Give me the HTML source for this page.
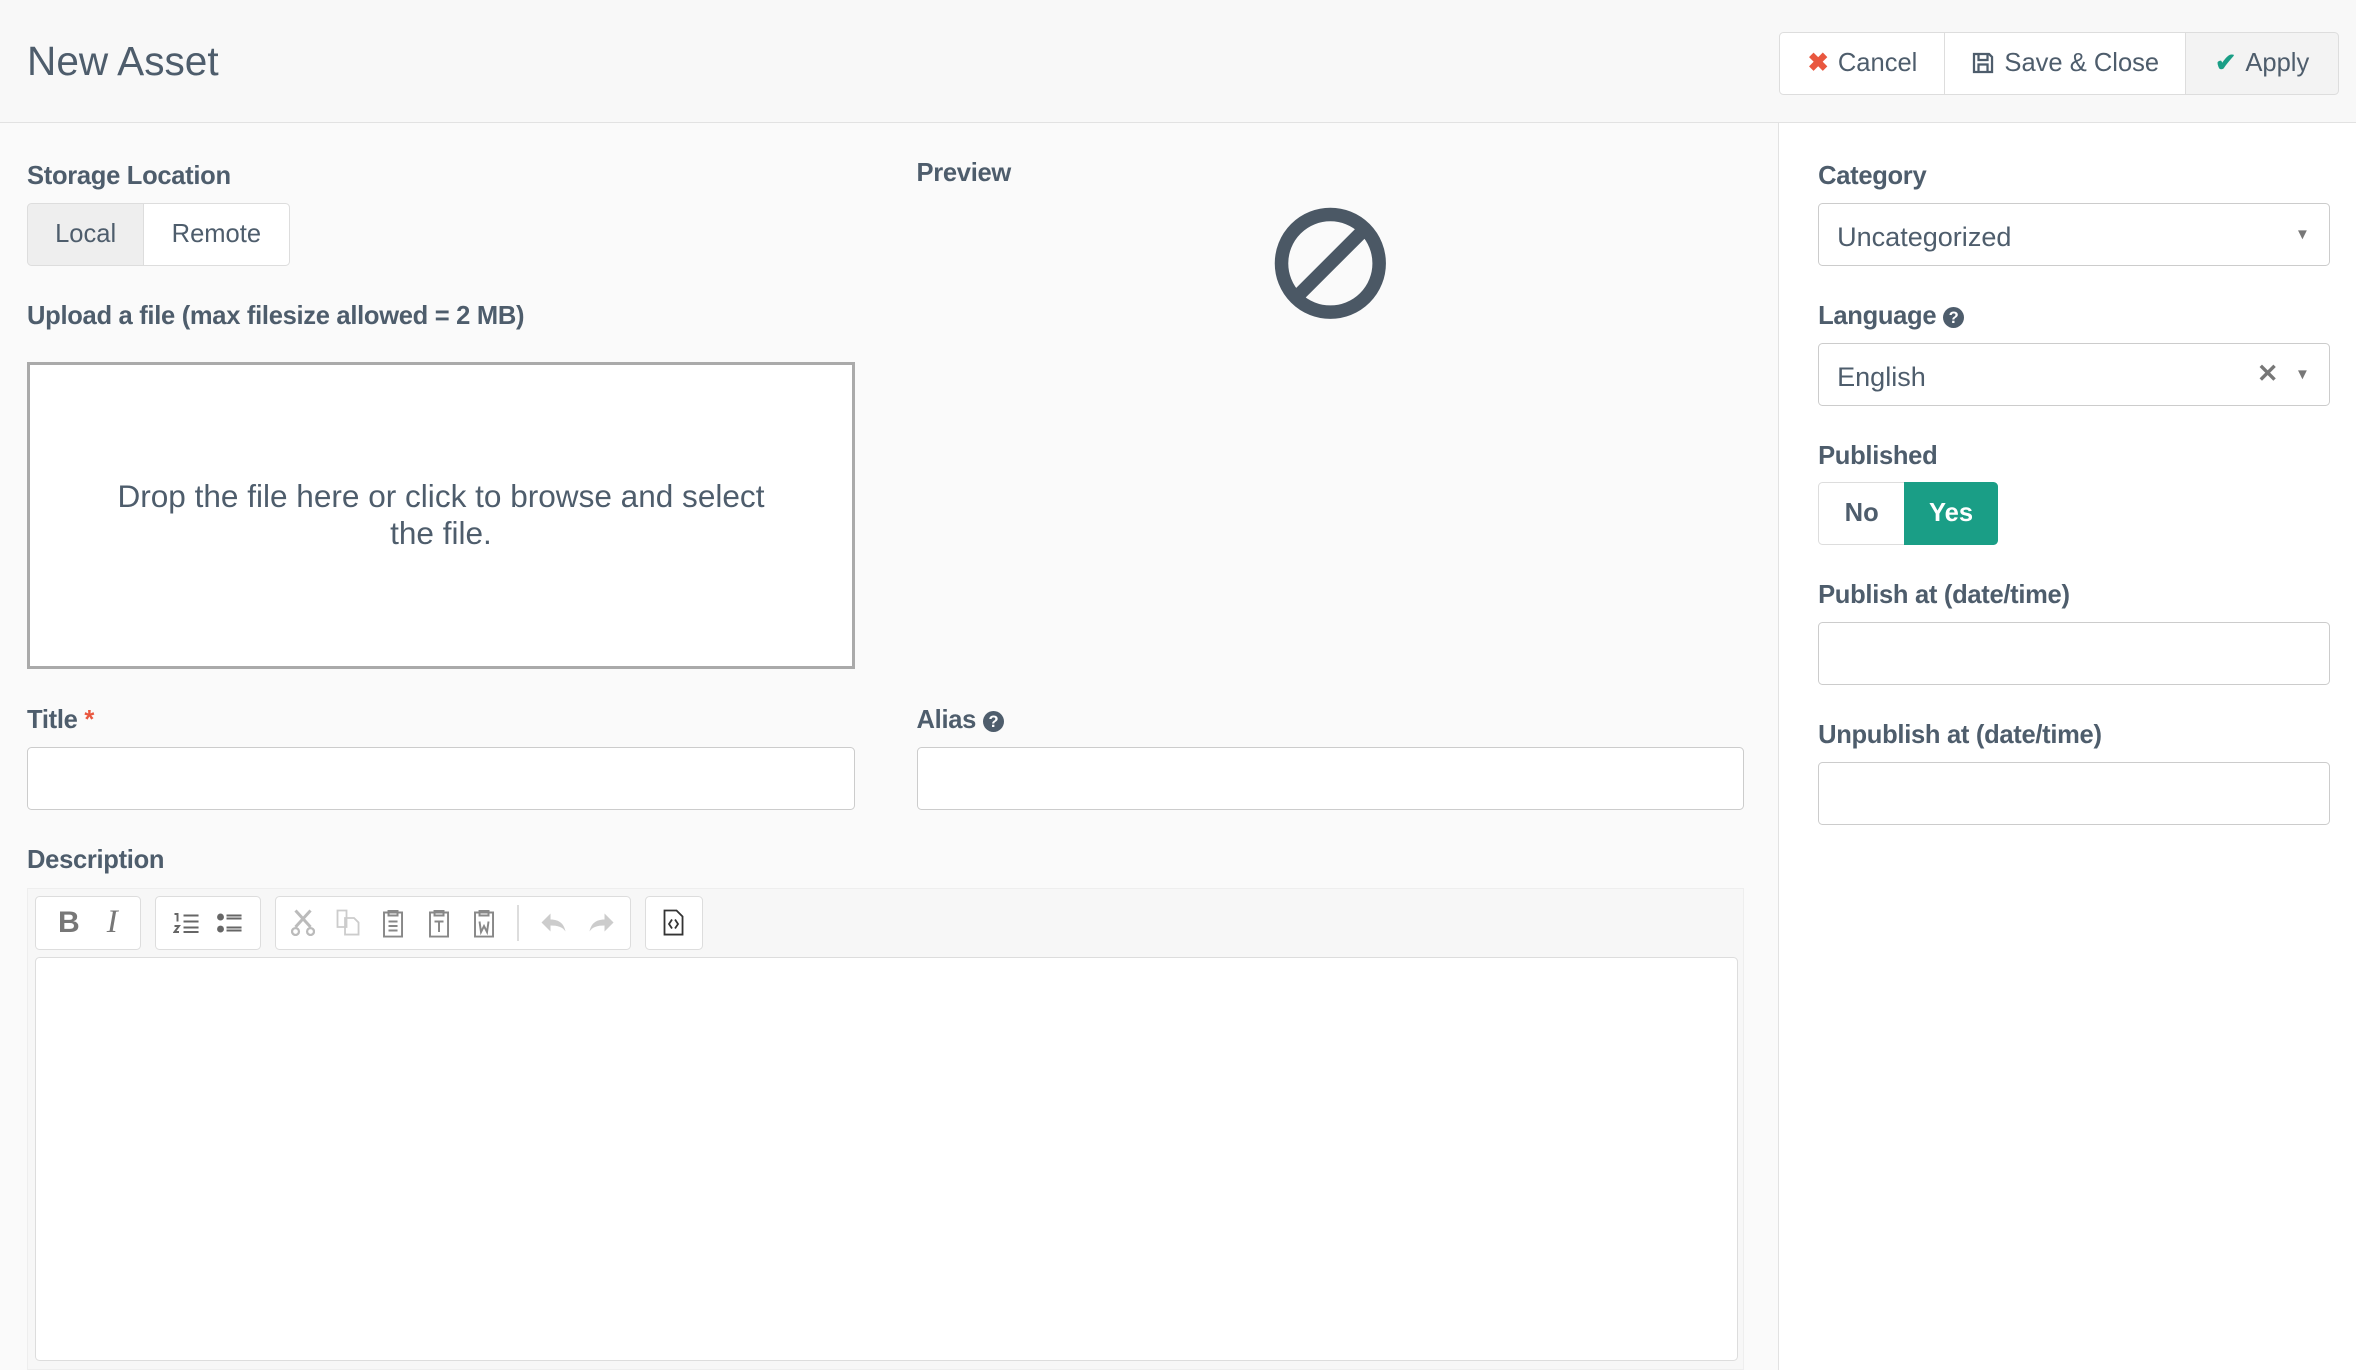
<!DOCTYPE html>
<html><head><meta charset="utf-8"><style>
html,body{margin:0;padding:0;}
body{width:1568px;height:912px;zoom:1.50255;overflow:hidden;background:#fafafa;font-family:"Liberation Sans",sans-serif;color:#4e5d6c;position:relative}
.a{position:absolute}
.hdr{left:0;top:0;width:1568px;height:81px;background:#f8f8f8;border-bottom:1px solid #e2e2e2}
.lbl{font-size:17px;font-weight:bold;color:#4e5d6c;letter-spacing:-.2px}
.inp{background:#fff;border:1px solid #ccc;border-radius:3px;box-sizing:border-box}
.btn{box-sizing:border-box;border:1px solid #ddd;background:#fff;font-size:17px;display:flex;align-items:center;justify-content:center;gap:6px}
.grp{background:#fff;border:1px solid #ddd;border-radius:3px;box-sizing:border-box;display:flex;align-items:center;justify-content:space-around;padding:0 6px}
.grp svg{display:block}
</style></head><body>
<div class="a hdr"></div>
<div class="a" style="left:18px;top:25px;font-size:27px;color:#4e5d6c">New Asset</div>
<div class="a btn" style="left:1184px;top:21px;width:111px;height:42px;border-radius:3px 0 0 3px"><span style="color:#e9573f;font-weight:bold">✖</span>Cancel</div>
<div class="a btn" style="left:1294px;top:21px;width:161px;height:42px">
<svg width="16" height="16" viewBox="0 0 16 16"><path d="M2 2h10l2 2v10H2z M5 2v4h6V2 M5 14v-5h6v5" fill="none" stroke="#4e5d6c" stroke-width="1.5"/></svg>Save &amp; Close</div>
<div class="a btn" style="left:1454px;top:21px;width:103px;height:42px;background:#f3f3f3;border-radius:0 3px 3px 0"><span style="color:#1a9e86;font-weight:bold">✔</span>Apply</div>

<div class="a" style="left:1183px;top:82px;width:385px;height:830px;background:#fff;border-left:1px solid #e2e2e2"></div>

<div class="a lbl" style="left:18px;top:108px">Storage Location</div>
<div class="a btn" style="left:18px;top:135px;width:78px;height:42px;background:#eee;border-radius:3px 0 0 3px">Local</div>
<div class="a btn" style="left:95px;top:135px;width:98px;height:42px;border-radius:0 3px 3px 0">Remote</div>
<div class="a lbl" style="left:18px;top:201px">Upload a file (max filesize allowed = 2 MB)</div>
<div class="a" style="left:18px;top:241px;width:551px;height:204px;box-sizing:border-box;border:2px solid #aaa;background:#fff;display:flex;align-items:center;justify-content:center;text-align:center;font-size:21px;line-height:25px;color:#4e5d6c;padding:0 46px">Drop the file here or click to browse and select the file.</div>

<div class="a lbl" style="left:610px;top:106px">Preview</div>
<svg class="a" style="left:846px;top:136px" width="79" height="79" viewBox="0 0 79 79"><circle cx="39.5" cy="39.5" r="32.5" fill="none" stroke="#4b5865" stroke-width="9"/><line x1="17" y1="62" x2="62" y2="17" stroke="#4b5865" stroke-width="9"/></svg>

<div class="a lbl" style="left:18px;top:470px">Title <span style="color:#e9573f">*</span></div>
<div class="a inp" style="left:18px;top:497px;width:551px;height:42px"></div>
<div class="a lbl" style="left:610px;top:470px">Alias <span style="display:inline-block;width:14px;height:14px;border-radius:50%;background:#4e5d6c;color:#fff;font-size:11px;line-height:14px;text-align:center;vertical-align:1px">?</span></div>
<div class="a inp" style="left:610px;top:497px;width:551px;height:42px"></div>

<div class="a lbl" style="left:18px;top:563px">Description</div>
<div class="a" style="left:18px;top:591px;width:1143px;height:321px;background:#f7f7f7;border:1px solid #eee;box-sizing:border-box"></div>
<div class="a grp" style="left:23px;top:596px;width:71px;height:36px;font-size:20px;color:#777"><b style="font-family:'Liberation Sans'">B</b><i style="font-family:'Liberation Serif';font-size:22px">I</i></div>
<div class="a grp" style="left:103px;top:596px;width:71px;height:36px">
<svg width="18" height="16"><path d="M1 2h2v5M1 10h3l-3 4h3M7 3h10M7 7h10M7 11h10M7 14h10" stroke="#666" fill="none" stroke-width="1.3"/></svg>
<svg width="18" height="16"><circle cx="3" cy="4" r="2.3" fill="#666"/><circle cx="3" cy="12" r="2.3" fill="#666"/><path d="M7 3h10M7 5h10M7 11h10M7 13h10" stroke="#666" stroke-width="1.3"/></svg></div>
<div class="a grp" style="left:183px;top:596px;width:237px;height:36px;justify-content:space-between;padding:0 10px">
<svg width="16" height="18"><path d="M3 1l10 11M13 1L3 12" stroke="#bbb" stroke-width="2"/><circle cx="3" cy="15" r="2.3" stroke="#bbb" fill="none" stroke-width="1.5"/><circle cx="13" cy="15" r="2.3" stroke="#bbb" fill="none" stroke-width="1.5"/></svg>
<svg width="16" height="18"><path d="M1 1h6v11H1zM6 6h6l3 3v8H6z" stroke="#ccc" fill="#fff" stroke-width="1.2"/></svg>
<svg width="16" height="20"><path d="M2 3h12v16H2zM5 2h6v3H5zM5 9h6M5 12h6M5 15h6" stroke="#888" fill="none" stroke-width="1.3"/></svg>
<svg width="16" height="20"><path d="M2 3h12v16H2zM5 2h6v3H5zM5 9h6M8 9v7" stroke="#888" fill="none" stroke-width="1.3"/></svg>
<svg width="16" height="20"><path d="M2 3h12v16H2zM5 2h6v3H5zM5 9l1 7 2-4 2 4 1-7" stroke="#888" fill="none" stroke-width="1.3"/></svg>
<span style="width:1px;height:24px;background:#ddd"></span>
<svg width="18" height="14"><path d="M7 1L1 7l6 6V9c5 0 8 1 10 4-1-5-4-8-10-8z" fill="#ccc"/></svg>
<svg width="18" height="14"><path d="M11 1l6 6-6 6V9C6 9 3 10 1 13c1-5 4-8 10-8z" fill="#ccc"/></svg></div>
<div class="a grp" style="left:429px;top:596px;width:39px;height:36px;justify-content:center">
<svg width="14" height="18"><path d="M1 1h8l4 4v12H1z" stroke="#333" fill="none" stroke-width="1.2"/><path d="M6 7l-2 3 2 3M8 7l2 3-2 3" stroke="#333" fill="none" stroke-width="1.2"/></svg></div>
<div class="a" style="left:23px;top:637px;width:1134px;height:269px;background:#fff;border:1px solid #ddd;border-radius:3px;box-sizing:border-box"></div>

<div class="a lbl" style="left:1210px;top:108px">Category</div>
<div class="a inp" style="left:1210px;top:135px;width:341px;height:42px;font-size:18px;padding:12px 0 0 12px">Uncategorized<span class="a" style="right:13px;top:15px;font-size:10px;color:#777">▼</span></div>
<div class="a lbl" style="left:1210px;top:201px">Language <span style="display:inline-block;width:14px;height:14px;border-radius:50%;background:#4e5d6c;color:#fff;font-size:11px;line-height:14px;text-align:center;vertical-align:1px">?</span></div>
<div class="a inp" style="left:1210px;top:228px;width:341px;height:42px;font-size:18px;padding:12px 0 0 12px">English<span class="a" style="right:34px;top:10px;font-size:17px;color:#777;font-weight:bold">✕</span><span class="a" style="right:13px;top:15px;font-size:10px;color:#777">▼</span></div>
<div class="a lbl" style="left:1210px;top:294px">Published</div>
<div class="a btn" style="left:1210px;top:321px;width:58px;height:42px;border-radius:3px 0 0 3px;font-weight:bold">No</div>
<div class="a btn" style="left:1267px;top:321px;width:63px;height:42px;border-radius:0 3px 3px 0;background:#1a9e86;border-color:#1a9e86;color:#fff;font-weight:bold">Yes</div>
<div class="a lbl" style="left:1210px;top:387px">Publish at (date/time)</div>
<div class="a inp" style="left:1210px;top:414px;width:341px;height:42px"></div>
<div class="a lbl" style="left:1210px;top:480px">Unpublish at (date/time)</div>
<div class="a inp" style="left:1210px;top:507px;width:341px;height:42px"></div>
</body></html>
